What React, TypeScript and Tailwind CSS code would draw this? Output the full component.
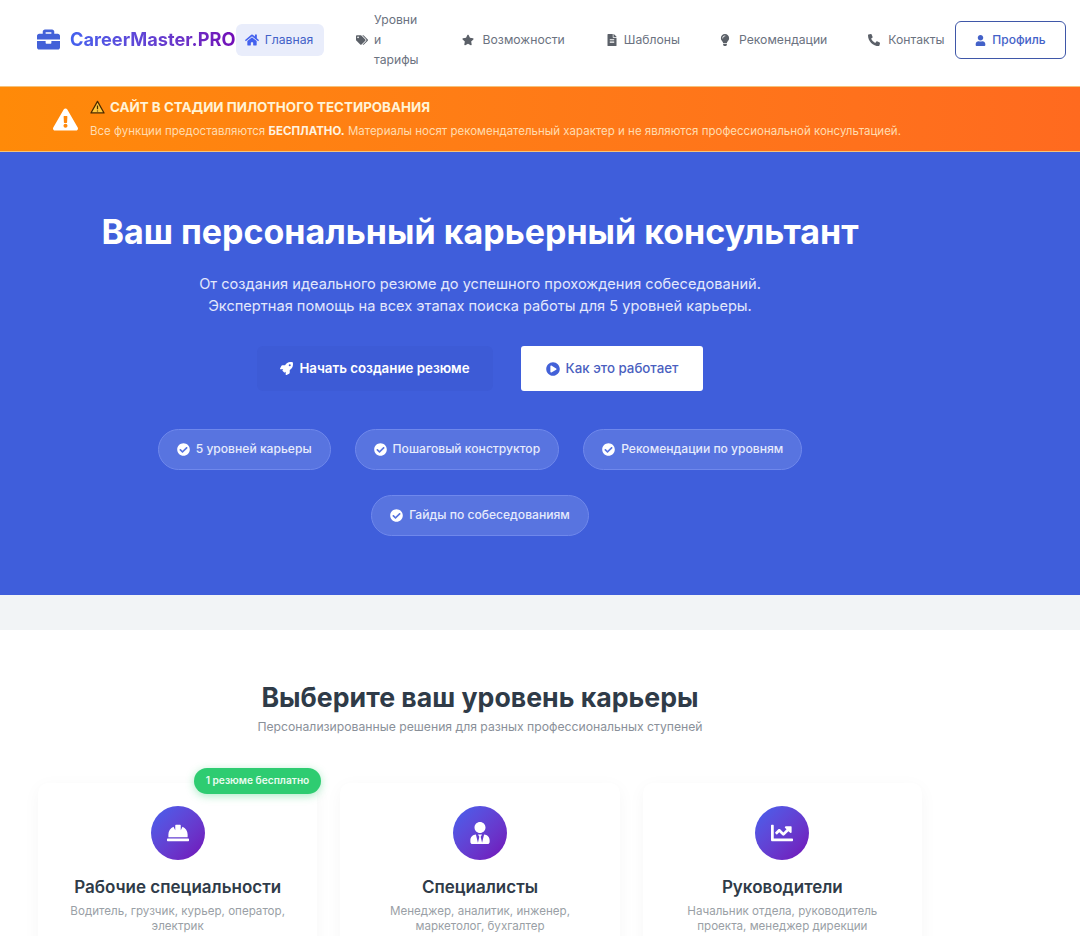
import {
  FaBriefcase,
  FaChartLine,
  FaCheckCircle,
  FaExclamationTriangle,
  FaFileAlt,
  FaHardHat,
  FaHome,
  FaLightbulb,
  FaPhoneAlt,
  FaPlayCircle,
  FaRocket,
  FaStar,
  FaTags,
  FaUser,
  FaUserTie,
} from 'react-icons/fa'

const features = ['5 уровней карьеры', 'Пошаговый конструктор', 'Рекомендации по уровням', 'Гайды по собеседованиям']

const levels = [
  { title: 'Рабочие специальности', text: 'Водитель, грузчик, курьер, оператор, электрик', icon: FaHardHat, badge: true },
  { title: 'Специалисты', text: 'Менеджер, аналитик, инженер, маркетолог, бухгалтер', icon: FaUserTie, badge: false },
  { title: 'Руководители', text: 'Начальник отдела, руководитель проекта, менеджер дирекции', icon: FaChartLine, badge: false },
]

function NavItem({ icon: Icon, label, className }: { icon: typeof FaStar; label: string; className: string }) {
  return (
    <a className={`flex items-center text-[12.2px] text-[#6b7280] ${className}`}>
      <Icon className="shrink-0 text-[12px] text-[#5b6068]" />
      <span>{label}</span>
    </a>
  )
}

export default function App() {
  return (
    <div className="h-[936px] overflow-hidden bg-white font-['Inter',sans-serif]">
      {/* Header */}
      <header className="flex h-[86px] items-center bg-white pr-[14px] pb-[6px] pl-[37px]">
        <div className="flex w-[199px] shrink-0 items-center gap-[10px]">
          <FaBriefcase className="shrink-0 text-[23px] text-[#4361d8]" />
          <span className="bg-gradient-to-r from-[#4361ee] to-[#7209b7] bg-clip-text text-[18.2px] font-bold whitespace-nowrap text-transparent">
            CareerMaster.PRO
          </span>
        </div>
        <nav className="flex flex-1 items-center">
          <a className="flex h-[32px] w-[88px] items-center justify-center gap-[6px] rounded-[6px] bg-[#e9edfb] pr-[2px] text-[12.2px] text-[#4361c8]">
            <FaHome className="text-[14px] text-[#4361ee]" />
            Главная
          </a>
          <a className="ml-[32px] flex items-center gap-[6px] text-[12.2px] leading-[20px] text-[#6b7280]">
            <FaTags className="text-[12px] text-[#5b6068]" />
            <span>
              Уровни
              <br />и
              <br />
              тарифы
            </span>
          </a>
          <NavItem icon={FaStar} label="Возможности" className="ml-[43px] gap-[9px]" />
          <NavItem icon={FaFileAlt} label="Шаблоны" className="ml-[41px] gap-[6px]" />
          <NavItem icon={FaLightbulb} label="Рекомендации" className="ml-[39px] gap-[8px]" />
          <NavItem icon={FaPhoneAlt} label="Контакты" className="ml-[41px] gap-[8px]" />
        </nav>
        <button className="flex h-[38px] w-[111px] shrink-0 items-center justify-center gap-[6px] rounded-[6px] border-[1.5px] border-[#3f57a8] text-[12px] font-medium text-[#4361c8]">
          <FaUser className="text-[11px] text-[#4361c8]" />
          Профиль
        </button>
      </header>

      {/* Pilot banner */}
      <div className="flex h-[66px] items-center gap-[12px] border-y border-y-[#f5c27a] bg-gradient-to-r from-[#ff8a08] to-[#ff6a1f] pl-[53px]">
        <FaExclamationTriangle className="shrink-0 text-[25px] text-white" />
        <div className="pb-[3px]">
          <div className="flex items-center gap-[5px] text-[13.4px] leading-[18px] font-bold text-[#fff3d6]">
            <svg viewBox="0 0 24 22" className="h-[14px] w-[15px] shrink-0">
              <path d="M12 2 L22.5 20.5 H1.5 Z" fill="#ffc83d" stroke="#4a2a00" strokeWidth="2" strokeLinejoin="round" />
              <path d="M12 8.5 V14.5 M12 16.5 V18" stroke="#4a2a00" strokeWidth="2" />
            </svg>
            САЙТ В СТАДИИ ПИЛОТНОГО ТЕСТИРОВАНИЯ
          </div>
          <p className="mt-[8px] text-[11.5px] leading-[14px] whitespace-nowrap text-[#ffdcb0]">
            Все функции предоставляются <b className="text-[#fff3e0]">БЕСПЛАТНО.</b> Материалы носят рекомендательный характер и не являются профессиональной консультацией.
          </p>
        </div>
      </div>

      {/* Hero */}
      <section className="h-[443px] bg-[#3f5edb]">
        <div className="flex w-[960px] flex-col items-center pt-[60px]">
          <h1 className="text-[34px] leading-[40px] font-bold whitespace-nowrap text-white">
            Ваш персональный карьерный консультант
          </h1>
          <p className="mt-[21px] text-center text-[14.6px] leading-[22px] text-[#e3e8fb]">
            От создания идеального резюме до успешного прохождения собеседований.
            <br />
            Экспертная помощь на всех этапах поиска работы для 5 уровней карьеры.
          </p>
          <div className="mt-[29px] flex items-center gap-[28px]">
            <button className="flex h-[45px] w-[236px] items-center justify-center gap-[6px] rounded-[6px] bg-[#3d5bd6] text-[13.3px] font-semibold text-white">
              <FaRocket className="text-[13px]" />
              Начать создание резюме
            </button>
            <button className="flex h-[45px] w-[182px] items-center justify-center gap-[6px] rounded-[3px] bg-white text-[13.3px] font-medium text-[#4a5fc0]">
              <FaPlayCircle className="text-[14px] text-[#4361d8]" />
              Как это работает
            </button>
          </div>
          <div className="mt-[38px] flex w-[700px] flex-wrap justify-center gap-x-[24px] gap-y-[25px]">
            {features.map(f => (
              <span
                key={f}
                className="flex h-[41px] items-center gap-[6px] rounded-full border border-[#6f88ec] bg-[#5874e0] px-[18px] text-[12.1px] font-medium text-[#e6ebfc]"
              >
                <FaCheckCircle className="text-[13px] text-white" />
                {f}
              </span>
            ))}
          </div>
        </div>
      </section>

      <div className="h-[35px] bg-[#f2f4f6]" />

      {/* Levels */}
      <section className="bg-white">
        <div className="flex w-[960px] flex-col items-center px-[38px] pt-[51px]">
          <h2 className="text-[26.7px] leading-[32px] font-bold whitespace-nowrap text-[#2f3b48]">Выберите ваш уровень карьеры</h2>
          <p className="mt-[6px] text-[12.2px] leading-[16px] whitespace-nowrap text-[#8a9099]">
            Персонализированные решения для разных профессиональных ступеней
          </p>
          <div className="mt-[48px] grid w-full grid-cols-3 gap-[23px]">
            {levels.map(l => (
              <div
                key={l.title}
                className="relative flex h-[200px] flex-col items-center rounded-[10px] bg-white px-[24px] pt-[23px] shadow-[0_4px_18px_rgba(0,0,0,0.04)]"
              >
                {l.badge && (
                  <span className="absolute top-[-15px] right-[-4px] flex h-[26px] items-center rounded-full bg-[#2ecc71] px-[12px] text-[10.2px] font-semibold text-[#e9fbf0] shadow-[0_2px_8px_rgba(46,204,113,0.4)]">
                    1 резюме бесплатно
                  </span>
                )}
                <div className="flex h-[54px] w-[54px] items-center justify-center rounded-full bg-gradient-to-br from-[#4361ee] to-[#7209b7] text-[22px] text-white">
                  <l.icon />
                </div>
                <h3 className="mt-[15px] text-[17px] leading-[24px] font-semibold whitespace-nowrap text-[#2f3b48]">{l.title}</h3>
                <p className="mt-[5px] text-center text-[11.6px] leading-[15px] text-[#9a9fa6]">{l.text}</p>
              </div>
            ))}
          </div>
        </div>
      </section>
    </div>
  )
}
